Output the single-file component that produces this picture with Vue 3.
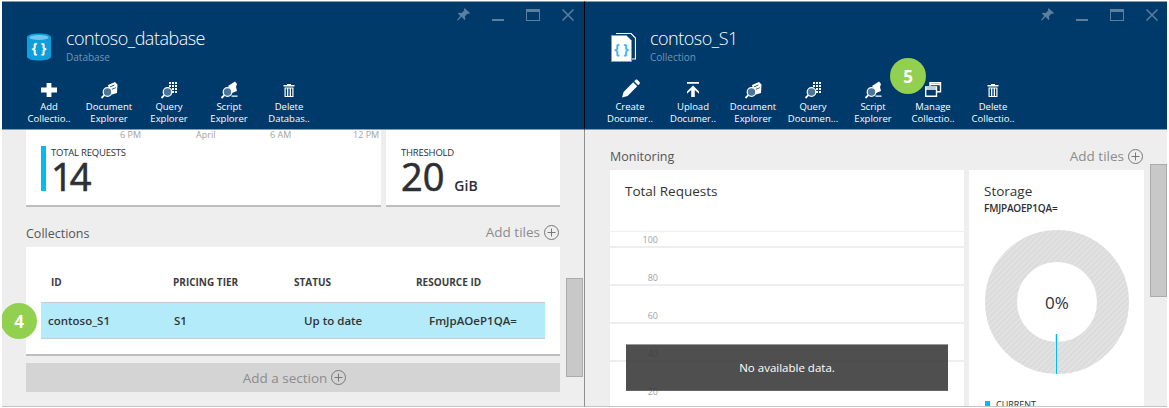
<script setup>
const icons = {
  plus: { fill: 'M9.6 6h4.800v4.600H20v4.800h-5.600V20H9.600v-4.600H4v-4.800h5.600z' },
  pencil: { fill: 'M4 20.500l1.600-5.600 9.600-9.600 4 4-9.600 9.600zM16.200 4.300l1.300-1.300c.6-.6 1.400-.6 2 0l2 2c.6.6.6 1.400 0 2l-1.300 1.300z' },
  upload: { fill: 'M6 5h12v1.800H6zM12 8.500l6 6v2.300l-4.200-3.800V20h-3.600v-7l-4.200 3.800v-2.300z' },
  doc: {
    glass: true,
    fill: 'M11 8l7-3 2.500 2.500-.5 8.500-5 1.500-3-5zM13 9.500l4.500-2-.3.9-4 1.800zM14.500 12l4.500-1.800-.2.9-4 1.700z'
  },
  query: {
    glass: true,
    fill: 'M12 5h2v2h-2zM15 5h2v2h-2zM18 5h2v2h-2zM12 8h2v2h-2zM15 8h2v2h-2zM18 8h2v2h-2zM15 11h2v2h-2zM18 11h2v2h-2zM15 14h2v2h-2zM18 14h2v2h-2z'
  },
  script: {
    glass: true,
    fill: 'M11 9l7-4.500 2 2.500-1 3 1 4-5 2-2-4.500zM14.500 18.500h6v1.300h-6z'
  },
  trash: {
    fill: 'M10 7h4v1h3.500v1.500h-11V8H10zM7.500 10.500h9V20h-9zM8.700 11.500V19H10v-7.500zM11.300 11.500V19h1.400v-7.500zM14 11.500V19h1.300v-7.500z'
  },
  manage: {
    stroke: 'M9 9V5.700h10.500v9H15.500M4.700 10h10.800v9.300H4.700zM4.700 12h10.800M9 7.500h10.500'
  }
}

const databaseTools = [
  { icon: 'plus', label: ['Add', 'Collectio..'] },
  { icon: 'doc', label: ['Document', 'Explorer'] },
  { icon: 'query', label: ['Query', 'Explorer'] },
  { icon: 'script', label: ['Script', 'Explorer'] },
  { icon: 'trash', label: ['Delete', 'Databas..'] }
]

const collectionTools = [
  { icon: 'pencil', label: ['Create', 'Documer..'] },
  { icon: 'upload', label: ['Upload', 'Documer..'] },
  { icon: 'doc', label: ['Document', 'Explorer'] },
  { icon: 'query', label: ['Query', 'Documen...'] },
  { icon: 'script', label: ['Script', 'Explorer'] },
  { icon: 'manage', label: ['Manage', 'Collectio..'] },
  { icon: 'trash', label: ['Delete', 'Collectio..'] }
]

const gridRows = ['100', '80', '60', '40', '20']
</script>

<template>
  <div class="page">
    <section class="blade left-blade">
      <header class="blade-head">
        <div class="win-controls">
          <svg class="win-pin" width="13" height="13" viewBox="0 0 14 14"><path d="M8 0l6 5.500-1.500 1-1-.5-3 3 .5 3-1 1-3-3.500L1 13.500 0 13l3.500-4.500L1 6l1-1 3 .5 3-3-.5-1z" /></svg>
          <span class="win-min"></span>
          <span class="win-max"></span>
          <svg class="win-close" width="12" height="12" viewBox="0 0 12 12"><path d="M.5.500l11 11M11.500.500l-11 11" /></svg>
        </div>
        <div class="title-row">
          <svg width="26" height="30" viewBox="0 0 26 30" class="db-icon">
            <path d="M0 4.500C0 2 5 .500 12 .500S24 2 24 4.500v19c0 2.500-5 4-12 4s-12-1.500-12-4z" fill="#109fdc" />
            <ellipse cx="12" cy="4.500" rx="9.500" ry="2.400" fill="#6cc8ee" />
            <text x="12" y="19.500" text-anchor="middle" class="brace-text" fill="#fff">{ }</text>
          </svg>
          <div>
            <div class="blade-title">contoso_database</div>
            <div class="blade-sub">Database</div>
          </div>
        </div>
        <div class="toolbar">
          <div v-for="tool in databaseTools" :key="tool.label.join()" class="tool">
            <svg width="24" height="24" viewBox="0 0 24 24">
              <path v-if="icons[tool.icon].fill" :d="icons[tool.icon].fill" fill="#fff" fill-rule="evenodd" />
              <path v-if="icons[tool.icon].stroke" :d="icons[tool.icon].stroke" fill="none" stroke="#fff" stroke-width="1.400" />
              <template v-if="icons[tool.icon].glass">
                <circle cx="10.500" cy="15" r="4.300" fill="#4d7596" stroke="#fff" stroke-width="1.200" />
                <path d="M7.300 18.200L4.500 21" stroke="#fff" stroke-width="1.800" />
              </template>
            </svg>
            <span>{{ tool.label[0] }}</span>
            <span>{{ tool.label[1] }}</span>
          </div>
        </div>
      </header>

      <div class="blade-body left-body">
        <div class="tile-row">
          <div class="tile usage-tile">
            <div class="axis-labels">
              <span>6 PM</span><span>April</span><span>6 AM</span><span>12 PM</span>
            </div>
            <div class="metric">
              <div class="metric-bar"></div>
              <div>
                <div class="metric-label">TOTAL REQUESTS</div>
                <div class="metric-value tight">14</div>
              </div>
            </div>
          </div>
          <div class="tile quota-tile">
            <div class="metric-label">THRESHOLD</div>
            <div class="metric-value">20 <small>GiB</small></div>
          </div>
        </div>

        <div class="section-head collections-head">
          <span class="section-title">Collections</span>
          <span class="add-tiles">Add tiles
            <svg width="15" height="15" viewBox="0 0 15 15"><circle cx="7.500" cy="7.500" r="7" /><path d="M7.500 3.500v8M3.500 7.500h8" /></svg>
          </span>
        </div>

        <div class="tile table-tile">
          <div class="table-head">
            <span>ID</span><span>PRICING TIER</span><span>STATUS</span><span>RESOURCE ID</span>
          </div>
          <div class="table-row">
            <span>contoso_S1</span><span>S1</span><span>Up to date</span><span>FmJpAOeP1QA=</span>
          </div>
        </div>

        <div class="add-section">Add a section
          <svg width="15" height="15" viewBox="0 0 15 15"><circle cx="7.500" cy="7.500" r="7" /><path d="M7.500 3.500v8M3.500 7.500h8" /></svg>
        </div>

        <div class="badge badge-four">4</div>
        <div class="scroll-thumb left-thumb"></div>
      </div>
    </section>

    <section class="blade right-blade">
      <header class="blade-head">
        <div class="win-controls">
          <svg class="win-pin" width="13" height="13" viewBox="0 0 14 14"><path d="M8 0l6 5.500-1.500 1-1-.5-3 3 .5 3-1 1-3-3.500L1 13.500 0 13l3.500-4.500L1 6l1-1 3 .5 3-3-.5-1z" /></svg>
          <span class="win-min"></span>
          <span class="win-max"></span>
          <svg class="win-close" width="12" height="12" viewBox="0 0 12 12"><path d="M.5.500l11 11M11.500.500l-11 11" /></svg>
        </div>
        <div class="title-row">
          <svg width="26" height="30" viewBox="0 0 26 30" class="db-icon">
            <path d="M6 .500h15l4.500 4.500v21h-4" fill="none" stroke="#fff" stroke-width="1.200" />
            <path d="M1.500 2.500h15l5 5v21h-20z" fill="#fff" stroke="#3cb7ec" stroke-width="1" />
            <text x="11.500" y="21" text-anchor="middle" class="brace-text" fill="#3cb7ec">{ }</text>
          </svg>
          <div>
            <div class="blade-title">contoso_S1</div>
            <div class="blade-sub">Collection</div>
          </div>
        </div>
        <div class="toolbar">
          <div v-for="tool in collectionTools" :key="tool.label.join()" class="tool">
            <svg width="24" height="24" viewBox="0 0 24 24">
              <path v-if="icons[tool.icon].fill" :d="icons[tool.icon].fill" fill="#fff" fill-rule="evenodd" />
              <path v-if="icons[tool.icon].stroke" :d="icons[tool.icon].stroke" fill="none" stroke="#fff" stroke-width="1.400" />
              <template v-if="icons[tool.icon].glass">
                <circle cx="10.500" cy="15" r="4.300" fill="#4d7596" stroke="#fff" stroke-width="1.200" />
                <path d="M7.300 18.200L4.500 21" stroke="#fff" stroke-width="1.800" />
              </template>
            </svg>
            <span>{{ tool.label[0] }}</span>
            <span>{{ tool.label[1] }}</span>
          </div>
        </div>
        <div class="badge badge-five">5</div>
      </header>

      <div class="blade-body right-body">
        <div class="section-head monitoring-head">
          <span class="section-title">Monitoring</span>
          <span class="add-tiles">Add tiles
            <svg width="15" height="15" viewBox="0 0 15 15"><circle cx="7.500" cy="7.500" r="7" /><path d="M7.500 3.500v8M3.500 7.500h8" /></svg>
          </span>
        </div>

        <div class="monitor-row">
          <div class="tile requests-tile">
            <div class="tile-title">Total Requests</div>
            <div class="chart">
              <div v-for="row in gridRows" :key="row" class="grid-row"><span>{{ row }}</span></div>
              <div class="no-data">No available data.</div>
            </div>
          </div>
          <div class="tile storage-tile">
            <div class="tile-title">Storage</div>
            <div class="storage-id">FMJPAOEP1QA=</div>
            <div class="donut">
              <svg width="146" height="146" viewBox="0 0 146 146">
                <defs>
                  <pattern id="hatch" width="4" height="4" patternUnits="userSpaceOnUse" patternTransform="rotate(-45)">
                    <rect width="4" height="4" fill="#dcdcdc" />
                    <rect width="4" height="1" fill="#e6e6e6" />
                  </pattern>
                </defs>
                <circle cx="73" cy="73" r="56" fill="none" stroke="url(#hatch)" stroke-width="32" />
                <path d="M72.500 105v40" stroke="#fff" stroke-width="3" />
                <path d="M72.500 105v40" stroke="#00bcf2" stroke-width="1.500" />
              </svg>
              <span class="donut-label">0%</span>
            </div>
            <div class="legend"><i></i>CURRENT</div>
          </div>
        </div>
        <div class="scroll-thumb right-thumb"></div>
      </div>
    </section>
  </div>
</template>

<style scoped>
.page {
  display: flex;
  width: 1169px;
  height: 408px;
  overflow: hidden;
  box-sizing: border-box;
  padding: 1px 2px 1px 2px;
  background: #fff;
  font-family: "Open Sans", "Noto Sans", sans-serif;
  color: #2c2f33;
}

.blade {
  display: flex;
  flex-direction: column;
  height: 406px;
  background: #eee;
  border-bottom: 1px solid #c4c4c4;
  box-sizing: border-box;
}

.left-blade {
  flex: none;
  width: 583px;
  border-right: 1px solid #8f8f8f;
}

.right-blade {
  flex: 1;
}

.blade-head {
  position: relative;
  flex: none;
  height: 129px;
  box-sizing: border-box;
  background: #003a6b;
  border-top: 1px solid #8a99a8;
  border-bottom: 1px solid #8a99a8;
  color: #fff;
}

.left-blade .blade-head {
  margin-right: -1px;
  border-right: 1px solid #000;
}

.win-controls {
  position: absolute;
  top: 6px;
  right: 9px;
  display: flex;
  align-items: center;
  gap: 22px;
  height: 13px;
}

.left-blade .win-controls {
  right: 10px;
}

.win-pin {
  fill: #5c7f9e;
}

.win-min {
  width: 12px;
  height: 2px;
  margin-top: 10px;
  background: #5c7f9e;
}

.win-max {
  width: 14px;
  height: 12px;
  box-sizing: border-box;
  border: 1.500px solid #5c7f9e;
  border-top-width: 3px;
}

.win-close {
  fill: none;
  stroke: #5c7f9e;
  stroke-width: 1.500;
}

.title-row {
  display: flex;
  align-items: flex-start;
  gap: 13px;
  padding: 31px 0 0 25px;
  height: 45px;
}

.right-blade .title-row {
  gap: 14px;
}

.db-icon {
  flex: none;
}

.brace-text {
  font-size: 14px;
  font-weight: 700;
}

.blade-title {
  margin-top: -7px;
  font-size: 18px;
  font-weight: 300;
  line-height: 24px;
  letter-spacing: -.5px;
}

.blade-sub {
  margin-top: 1px;
  font-size: 10px;
  line-height: 12px;
  color: #7594b0;
}

.toolbar {
  display: flex;
  padding-left: 17px;
}

.right-blade .toolbar {
  padding-left: 15px;
}

.right-blade .tool:first-child {
  margin-right: 3px;
}

.tool {
  display: flex;
  flex-direction: column;
  align-items: center;
  width: 60px;
  height: 48px;
  font-size: 9.500px;
  line-height: 12px;
  white-space: nowrap;
}

.tool svg {
  margin-top: -1px;
}

.blade-body {
  position: relative;
  flex: 1;
  overflow: hidden;
  min-height: 0;
}

.tile {
  background: #fff;
  box-sizing: border-box;
}

.left-body {
  padding: 0 24px;
}

.tile-row {
  display: flex;
  gap: 5px;
}

.usage-tile {
  position: relative;
  width: 355px;
  height: 77px;
  border-bottom: 2px solid #bdbdbd;
}

.quota-tile {
  flex: 1;
  height: 77px;
  padding-top: 17px;
  padding-left: 15px;
  border-bottom: 2px solid #bdbdbd;
}

.axis-labels span {
  position: absolute;
  top: -1px;
  font-size: 9px;
  line-height: 11px;
  color: #a2a2a2;
}

.axis-labels span:nth-child(1) { left: 94px; }
.axis-labels span:nth-child(2) { left: 170px; }
.axis-labels span:nth-child(3) { left: 244px; }
.axis-labels span:nth-child(4) { left: 327px; }

.metric {
  display: flex;
  gap: 5px;
  padding: 17px 0 0 15px;
}

.metric-bar {
  width: 5px;
  height: 45px;
  margin-top: -1px;
  background: #00bcf2;
}

.metric-label {
  font-size: 9.500px;
  line-height: 11px;
  letter-spacing: -.2px;
}

.metric-value {
  font-size: 38px;
  line-height: 36px;
  white-space: nowrap;
  -webkit-text-stroke: .6px #2c2f33;
}

.metric-value.tight {
  letter-spacing: -3px;
}

.metric-value small {
  font-size: 14px;
  font-weight: 600;
  -webkit-text-stroke: 0;
}

.section-head {
  display: flex;
  justify-content: space-between;
  align-items: center;
  height: 20px;
}

.collections-head {
  margin-top: 16px;
  margin-bottom: 4px;
}

.section-title {
  font-size: 12.500px;
  color: #555;
}

.add-tiles {
  display: flex;
  align-items: center;
  gap: 4px;
  font-size: 13.500px;
  color: #8c8c8c;
}

.collections-head .add-tiles {
  margin-top: -2px;
}

.add-tiles svg,
.add-section svg {
  fill: none;
  stroke: #777;
  stroke-width: 1;
  margin-right: 1px;
}

.table-tile {
  height: 109px;
  padding: 27px 15px 0;
  border-bottom: 2px solid #bdbdbd;
}

.table-head,
.table-row {
  display: grid;
  grid-template-columns: 122px 121px 122px 1fr;
}

.table-head {
  height: 28px;
  padding-left: 10px;
  font-size: 10px;
  font-weight: 700;
  line-height: 16px;
  color: #3c3c3c;
}

.table-row {
  align-items: center;
  height: 37px;
  box-sizing: border-box;
  padding-left: 7px;
  background: #b3ebfb;
  border-top: 1px solid #ccc;
  border-bottom: 1px solid #ccc;
  font-size: 11.500px;
  font-weight: 600;
  color: #333;
}

.table-row span:nth-child(2) { padding-left: 4px; }
.table-row span:nth-child(3) { padding-left: 13px; }
.table-row span:nth-child(4) { padding-left: 16px; }

.add-section {
  display: flex;
  justify-content: center;
  align-items: center;
  gap: 4px;
  height: 29px;
  margin-top: 7px;
  padding-left: 4px;
  background: #d4d4d4;
  font-size: 13.500px;
  color: #8c8c8c;
}

.badge {
  position: absolute;
  display: flex;
  justify-content: center;
  align-items: center;
  width: 36px;
  height: 36px;
  border-radius: 50%;
  background: #92d050;
  color: #fff;
  font-size: 17px;
  font-weight: 700;
}

.badge-four {
  left: -1px;
  top: 173px;
}

.badge-five {
  left: 305px;
  top: 56px;
}

.scroll-thumb {
  position: absolute;
  width: 17px;
  box-sizing: border-box;
  background: #c8c8c8;
  border: 1px solid #ababab;
}

.left-thumb {
  right: 1px;
  top: 148px;
  height: 99px;
}

.right-thumb {
  right: 0;
  top: 34px;
  height: 133px;
}

.right-body {
  padding: 0 23px 0 25px;
}

.monitoring-head {
  margin-top: 16px;
  margin-bottom: 4px;
}

.monitor-row {
  display: flex;
  gap: 5px;
  height: 240px;
}

.requests-tile {
  position: relative;
  width: 354px;
  padding-top: 12px;
}

.tile-title {
  padding-left: 15px;
  font-size: 13.500px;
  line-height: 18px;
  color: #333;
}

.chart {
  position: relative;
  margin-top: 31px;
}

.grid-row {
  display: flex;
  align-items: flex-end;
  justify-content: flex-end;
  box-sizing: border-box;
  width: 100%;
  height: 38px;
  padding-right: 306px;
  border-top: 2px solid #eee;
  font-size: 9px;
  line-height: 13px;
  color: #a2a2a2;
}

.grid-row:first-of-type {
  height: 15px;
  border-top-width: 1px;
}

.no-data {
  position: absolute;
  left: 16px;
  right: 16px;
  top: 113px;
  height: 47px;
  display: flex;
  justify-content: center;
  align-items: center;
  background: rgba(55, 55, 55, .88);
  border-top: 1px solid #999;
  border-bottom: 1px solid #666;
  box-sizing: border-box;
  color: #fff;
  font-size: 11.500px;
}

.storage-tile {
  position: relative;
  width: 175px;
  padding-top: 12px;
}

.storage-id {
  padding-left: 15px;
  font-size: 10px;
  font-weight: 600;
  line-height: 16px;
  letter-spacing: -.2px;
}

.donut {
  position: relative;
  width: 146px;
  height: 146px;
  margin: 13px 0 0 15px;
}

.donut-label {
  position: absolute;
  inset: 0;
  display: flex;
  justify-content: center;
  align-items: center;
  font-size: 17px;
}

.legend {
  display: flex;
  align-items: center;
  gap: 6px;
  margin: 23px 0 0 16px;
  font-size: 9px;
}

.legend i {
  width: 5px;
  height: 8px;
  background: #00bcf2;
}
</style>

<style>
html,
body {
  margin: 0;
  background: #fff;
}
</style>
